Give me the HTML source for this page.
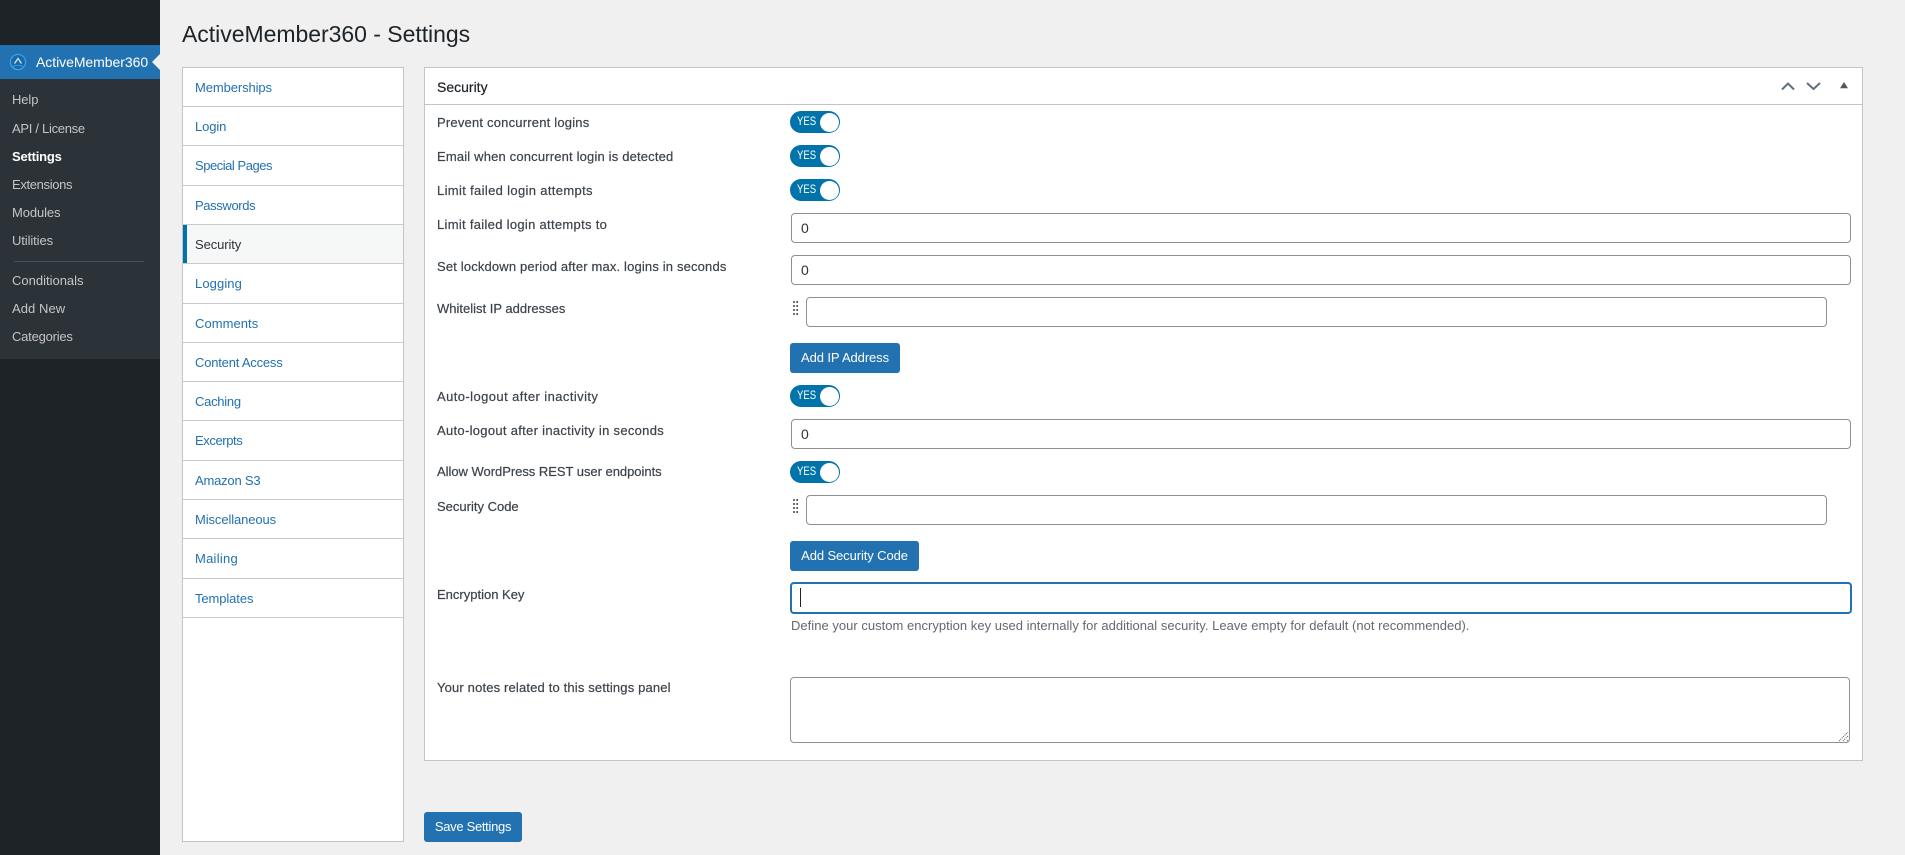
<!DOCTYPE html>
<html lang="en"><head><meta charset="utf-8"><title>ActiveMember360 - Settings</title>
<style>
html,body{margin:0;padding:0;width:1905px;height:855px;overflow:hidden;background:#f0f0f1;font:13px/20px "Liberation Sans",Arial,sans-serif;color:#3c434a}
.b{position:absolute;box-sizing:border-box}
.t{position:absolute;white-space:nowrap;line-height:20px;height:20px}
.m{color:#c3c4c7;left:12px;letter-spacing:-.1px}
.tab{color:#2271b1;left:195px;letter-spacing:-.1px}
.l{left:437px;color:#3c434a;-webkit-text-stroke:.2px #3c434a}
.line{position:absolute;left:183px;width:220px;height:1px;background:#c9cacf}
.tg{position:absolute;left:790px;width:50px;height:22px;border-radius:11px;background:#0073aa}
.tg i{position:absolute;left:29.500px;top:1.500px;width:19px;height:19px;border-radius:50%;background:#fff}
.tg span{position:absolute;left:7px;top:-1px;font-size:12px;line-height:22px;color:#fff;transform:scaleX(.8);transform-origin:0 50%}
.in{position:absolute;box-sizing:border-box;background:#fff;border:1px solid #8c8f94;border-radius:4px;height:30px}
.in span{position:absolute;left:9px;top:4px;line-height:20px;font-size:14px;color:#2c3338}
.btn{position:absolute;box-sizing:border-box;height:30px;background:#2271b1;border-radius:3px;color:#fff;text-align:center;line-height:30px;font-size:13px;white-space:nowrap;letter-spacing:-.1px}
.h{position:absolute;width:6px;height:16px;background-image:radial-gradient(circle at 1px 1px,#50575e 1px,transparent 1.1px);background-size:3.2px 4px}
</style></head><body>

<div class="b" style="left:0;top:0;width:160px;height:855px;background:#1d2327"></div>
<div class="b" style="left:0;top:45px;width:160px;height:34px;background:#2271b1"></div>
<div class="b" style="left:0;top:79px;width:160px;height:280px;background:#2c3338"></div>
<div class="b" style="left:152px;top:54px;width:0;height:0;border:8px solid transparent;border-right-color:#f0f0f1;border-left:0"></div>
<svg class="b" style="left:9px;top:53px" width="18" height="18" viewBox="0 0 18 18"><circle cx="9" cy="9" r="7.600" fill="#1b68a8" stroke="#3aa0e8" stroke-width="1.300"/><path d="M5.500 10.500 9 5.500l3.500 5" fill="none" stroke="#cfe8f8" stroke-width="1.300"/><path d="M4 13.500c3-1.500 7-1.500 10 0" fill="none" stroke="#3aa0e8" stroke-width="1"/></svg>
<div class="t" style="left:36px;top:52px;color:#fff;letter-spacing:-.05px;font-size:14px">ActiveMember360</div>
<div class="t m" style="top:90px">Help</div>
<div class="t m" style="top:119px;letter-spacing:-.29px">API / License</div>
<div class="t m" style="top:147px;color:#fff;font-weight:700;letter-spacing:-.2px">Settings</div>
<div class="t m" style="top:175px;letter-spacing:-.34px">Extensions</div>
<div class="t m" style="top:203px">Modules</div>
<div class="t m" style="top:231px">Utilities</div>
<div class="b" style="left:14px;top:261px;width:130px;height:1px;background:#4a4f54"></div>
<div class="t m" style="top:271px;letter-spacing:0">Conditionals</div>
<div class="t m" style="top:299px;letter-spacing:.07px">Add New</div>
<div class="t m" style="top:327px;letter-spacing:-.22px">Categories</div>

<div class="t" style="left:182px;top:18px;height:32px;line-height:32px;font-size:23px;color:#1d2327;letter-spacing:-.03px">ActiveMember360 - Settings</div>

<div class="b" style="left:182px;top:67px;width:222px;height:775px;background:#fff;border:1px solid #c3c4c7"></div>
<div class="line" style="top:106px"></div><div class="line" style="top:145px"></div><div class="line" style="top:185px"></div><div class="line" style="top:224px"></div><div class="line" style="top:263px"></div><div class="line" style="top:303px"></div><div class="line" style="top:342px"></div><div class="line" style="top:381px"></div><div class="line" style="top:420px"></div><div class="line" style="top:460px"></div><div class="line" style="top:499px"></div><div class="line" style="top:538px"></div><div class="line" style="top:578px"></div><div class="line" style="top:617px"></div>
<div class="b" style="left:183px;top:225px;width:220px;height:38px;background:#f6f7f7"></div>
<div class="b" style="left:183px;top:225px;width:4px;height:38px;background:#0073aa"></div>
<div class="t tab" style="top:78px">Memberships</div>
<div class="t tab" style="top:117px">Login</div>
<div class="t tab" style="top:156px;letter-spacing:-.47px">Special Pages</div>
<div class="t tab" style="top:196px;letter-spacing:-.37px">Passwords</div>
<div class="t tab" style="top:235px;color:#2c3338;letter-spacing:-.1px">Security</div>
<div class="t tab" style="top:274px;letter-spacing:.1px">Logging</div>
<div class="t tab" style="top:314px;letter-spacing:.05px">Comments</div>
<div class="t tab" style="top:353px;letter-spacing:-.2px">Content Access</div>
<div class="t tab" style="top:392px;letter-spacing:-.27px">Caching</div>
<div class="t tab" style="top:431px;letter-spacing:-.4px">Excerpts</div>
<div class="t tab" style="top:471px;letter-spacing:-.2px">Amazon S3</div>
<div class="t tab" style="top:510px">Miscellaneous</div>
<div class="t tab" style="top:549px;letter-spacing:.25px">Mailing</div>
<div class="t tab" style="top:589px">Templates</div>

<div class="b" style="left:424px;top:67px;width:1439px;height:694px;background:#fff;border:1px solid #c3c4c7"></div>
<div class="b" style="left:425px;top:104px;width:1437px;height:1px;background:#c3c4c7"></div>
<div class="t" style="left:437px;top:77px;font-size:14px;color:#1d2327;-webkit-text-stroke:.2px #1d2327">Security</div>
<svg class="b" style="left:1778px;top:78px" width="74" height="16" viewBox="0 0 74 16"><path d="M4 11.500 10 5.500l6 6" fill="none" stroke="#5f6f80" stroke-width="2"/><path d="M29 5l6.500 6L42 5" fill="none" stroke="#5f6f80" stroke-width="2"/><path d="M62 10.200l4-6.200 4 6.200z" fill="#50575e"/></svg>

<div class="t l" style="top:113px;letter-spacing:.2px">Prevent concurrent logins</div>
<div class="t l" style="top:147px;letter-spacing:.17px">Email when concurrent login is detected</div>
<div class="t l" style="top:181px;letter-spacing:.34px">Limit failed login attempts</div>
<div class="t l" style="top:215px;letter-spacing:.3px">Limit failed login attempts to</div>
<div class="t l" style="top:257px;letter-spacing:.16px">Set lockdown period after max. logins in seconds</div>
<div class="t l" style="top:299px">Whitelist IP addresses</div>
<div class="t l" style="top:387px;letter-spacing:.42px">Auto-logout after inactivity</div>
<div class="t l" style="top:421px;letter-spacing:.3px">Auto-logout after inactivity in seconds</div>
<div class="t l" style="top:462px;letter-spacing:-.03px">Allow WordPress REST user endpoints</div>
<div class="t l" style="top:497px">Security Code</div>
<div class="t l" style="top:585px">Encryption Key</div>
<div class="t l" style="top:678px;letter-spacing:.16px">Your notes related to this settings panel</div>

<div class="tg" style="top:111px"><span>YES</span><i></i></div>
<div class="tg" style="top:145px"><span>YES</span><i></i></div>
<div class="tg" style="top:179px"><span>YES</span><i></i></div>
<div class="tg" style="top:385px"><span>YES</span><i></i></div>
<div class="tg" style="top:461px"><span>YES</span><i></i></div>

<div class="in" style="left:791px;top:213px;width:1060px"><span>0</span></div>
<div class="in" style="left:791px;top:255px;width:1060px"><span>0</span></div>
<div class="h" style="left:793px;top:301px"></div>
<div class="in" style="left:806px;top:297px;width:1021px"></div>
<div class="btn" style="left:790px;top:343px;width:110px">Add IP Address</div>
<div class="in" style="left:791px;top:419px;width:1060px"><span>0</span></div>
<div class="h" style="left:793px;top:499px"></div>
<div class="in" style="left:806px;top:495px;width:1021px"></div>
<div class="btn" style="left:790px;top:541px;width:129px">Add Security Code</div>
<div class="in" style="left:790px;top:582px;width:1062px;height:32px;border:2px solid #2271b1"></div>
<div class="b" style="left:800px;top:588px;width:1px;height:19px;background:#1d2327"></div>
<div class="t" style="left:791px;top:616px;color:#646970;letter-spacing:.02px">Define your custom encryption key used internally for additional security. Leave empty for default (not recommended).</div>
<div class="in" style="left:790px;top:677px;width:1060px;height:66px"></div>
<svg class="b" style="left:1839px;top:732px" width="10" height="10" viewBox="0 0 10 10"><path d="M0 9 9 0M4 9 9 4M8 9 9 8" stroke="#50575e" stroke-width="1" stroke-dasharray="1 1"/></svg>
<div class="btn" style="left:424px;top:812px;width:98px;letter-spacing:-.3px">Save Settings</div>
</body></html>
